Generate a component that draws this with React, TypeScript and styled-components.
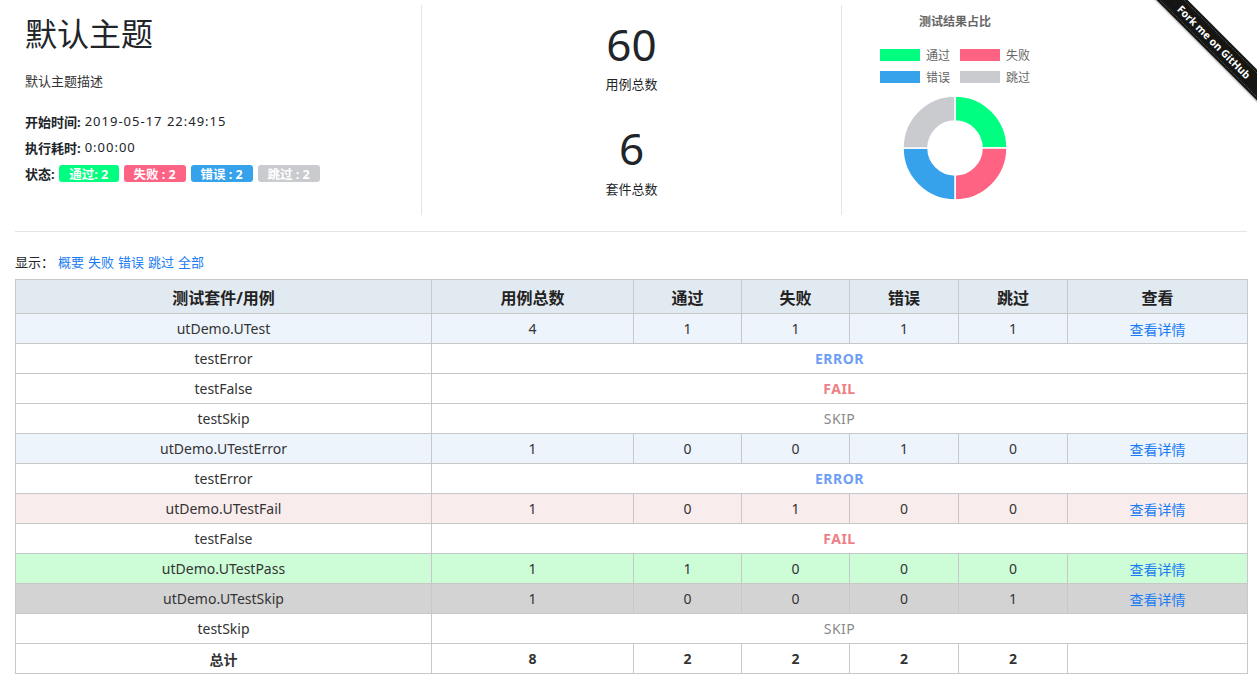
import React from "react";
import styled, { createGlobalStyle } from "styled-components";

const GlobalStyle = createGlobalStyle`
  html, body { margin: 0; padding: 0; background: #fff; }
  body {
    font-family: "Noto Sans", "Noto Sans CJK SC", sans-serif;
    color: #212529;
    font-size: 13px;
  }
`;

const Page = styled.div`
  position: relative;
  padding: 0 10px 0 15px;
  overflow: hidden;
  width: 1257px;
  box-sizing: border-box;
`;

const TopRow = styled.div`
  display: grid;
  grid-template-columns: 406px 420px 1fr;
  margin-top: 5px;
  height: 210px;
`;

const Col = styled.div<{ $border?: boolean }>`
  border-left: ${(p) => (p.$border ? "1px solid #e5e5e5" : "none")};
  display: flex;
  flex-direction: column;
`;

const InfoCol = styled(Col)`
  padding-left: 10px;
`;

const Title = styled.h1`
  margin: 9px 0 0;
  font-size: 32px;
  line-height: 40px;
  font-weight: 400;
  color: #212529;
`;

const Desc = styled.p`
  margin: 17px 0 0;
  font-size: 13px;
  line-height: 20px;
  color: #333;
`;

const InfoList = styled.div`
  margin-top: 17px;
  display: flex;
  flex-direction: column;
`;

const InfoLine = styled.div`
  display: flex;
  align-items: center;
  height: 26px;
  font-size: 13px;
  color: #212529;
`;

const Label = styled.b`
  font-weight: 700;
  margin-right: 4px;
`;

const Value = styled.span`
  letter-spacing: 1px;
`;

const Badge = styled.span<{ $bg: string; $w: number }>`
  display: inline-flex;
  align-items: center;
  justify-content: center;
  height: 17px;
  width: ${(p) => p.$w}px;
  border-radius: 3px;
  background: ${(p) => p.$bg};
  color: #fff;
  font-weight: 700;
  font-size: 12.5px;
  margin-right: 5px;
`;

const StatsCol = styled(Col)`
  align-items: center;
`;

const BigNum = styled.div<{ $top: number }>`
  margin-top: ${(p) => p.$top}px;
  font-size: 44px;
  line-height: 52px;
  color: #212529;
`;

const StatLabel = styled.div<{ $top: number }>`
  margin-top: ${(p) => p.$top}px;
  font-size: 13px;
  line-height: 20px;
  color: #212529;
`;

const ChartBox = styled.div`
  width: 226px;
  display: flex;
  flex-direction: column;
  align-items: center;
`;

const ChartTitle = styled.div`
  margin-top: 9px;
  font-size: 12px;
  line-height: 16px;
  font-weight: 700;
  color: #666;
`;

const Legend = styled.div`
  margin-top: 19px;
  display: flex;
  flex-direction: column;
  gap: 10px;
`;

const LegendRow = styled.div`
  display: flex;
  gap: 10px;
`;

const LegendItem = styled.div`
  display: flex;
  align-items: center;
  height: 12px;
  font-size: 12px;
  color: #666;
`;

const Swatch = styled.span<{ $bg: string }>`
  width: 40px;
  height: 12px;
  background: ${(p) => p.$bg};
  margin-right: 6px;
`;

const Donut = styled.svg`
  margin-top: 12px;
  display: block;
`;

const Rule = styled.hr`
  margin: 16px 0 0;
  border: 0;
  border-top: 1px solid #e5e5e5;
`;

const FilterBar = styled.div`
  margin-top: 20px;
  font-size: 13px;
  line-height: 20px;
  color: #212529;
  display: flex;
  gap: 4px;
`;

const FilterLabel = styled.span``;

const FilterLink = styled.a`
  color: #1a7cf5;
  text-decoration: none;
  cursor: pointer;
`;

const Table = styled.table`
  margin-top: 7px;
  width: 1232px;
  border-collapse: collapse;
  table-layout: fixed;
  font-size: 14px;
  color: #333;
`;

const HeadCell = styled.th`
  height: 33px;
  padding: 0;
  border: 1px solid #c8c8c8;
  background: #e2eaf1;
  font-size: 16px;
  font-weight: 700;
  color: #222;
  text-align: center;
`;

const Row = styled.tr<{ $bg?: string }>`
  background: ${(p) => p.$bg || "#fff"};
`;

const Cell = styled.td<{ $bold?: boolean }>`
  height: 29px;
  padding: 0;
  border: 1px solid #c8c8c8;
  text-align: center;
  font-weight: ${(p) => (p.$bold ? 700 : 400)};
`;

const StatusText = styled.span<{ $color: string; $bold?: boolean }>`
  color: ${(p) => p.$color};
  font-weight: ${(p) => (p.$bold ? 700 : 400)};
  letter-spacing: 0.5px;
`;

const DetailLink = styled.a`
  color: #1a7cf5;
  text-decoration: none;
  cursor: pointer;
`;

const RibbonWrap = styled.div`
  position: absolute;
  top: 0;
  right: 0;
  width: 149px;
  height: 149px;
  overflow: hidden;
  pointer-events: none;
`;

const Ribbon = styled.div`
  position: absolute;
  left: 6px;
  top: 31px;
  width: 200px;
  height: 22px;
  background: #151513;
  transform: rotate(45deg);
  display: flex;
  align-items: center;
  justify-content: center;
  color: #fff;
  font-size: 10.5px;
  font-weight: 700;
  box-shadow: 0 1px 2px rgba(0, 0, 0, 0.3);
  &::before,
  &::after {
    content: "";
    position: absolute;
    left: 0;
    right: 0;
    border-top: 1px dotted rgba(255, 255, 255, 0.25);
  }
  &::before { top: 2px; }
  &::after { bottom: 2px; }
`;

const GREEN = "#00ff80";
const PINK = "#ff6384";
const BLUE = "#36a2eb";
const GRAY = "#c9cbcf";

function sector(cx: number, cy: number, r0: number, r1: number, a0: number, a1: number) {
  const rad = (d: number) => (d * Math.PI) / 180;
  const p = (r: number, a: number) => [cx + r * Math.cos(rad(a)), cy + r * Math.sin(rad(a))];
  const [x1, y1] = p(r1, a0);
  const [x2, y2] = p(r1, a1);
  const [x3, y3] = p(r0, a1);
  const [x4, y4] = p(r0, a0);
  return `M${x1} ${y1} A${r1} ${r1} 0 0 1 ${x2} ${y2} L${x3} ${y3} A${r0} ${r0} 0 0 0 ${x4} ${y4} Z`;
}

type Suite = {
  kind: "suite";
  name: string;
  vals: number[];
  bg: string;
};
type Case = { kind: "case"; name: string; status: "ERROR" | "FAIL" | "SKIP" };

const SUITE_BG = "#edf4fc";
const rows: (Suite | Case)[] = [
  { kind: "suite", name: "utDemo.UTest", vals: [4, 1, 1, 1, 1], bg: SUITE_BG },
  { kind: "case", name: "testError", status: "ERROR" },
  { kind: "case", name: "testFalse", status: "FAIL" },
  { kind: "case", name: "testSkip", status: "SKIP" },
  { kind: "suite", name: "utDemo.UTestError", vals: [1, 0, 0, 1, 0], bg: SUITE_BG },
  { kind: "case", name: "testError", status: "ERROR" },
  { kind: "suite", name: "utDemo.UTestFail", vals: [1, 0, 1, 0, 0], bg: "#f9ecec" },
  { kind: "case", name: "testFalse", status: "FAIL" },
  { kind: "suite", name: "utDemo.UTestPass", vals: [1, 1, 0, 0, 0], bg: "#ccfdd7" },
  { kind: "suite", name: "utDemo.UTestSkip", vals: [1, 0, 0, 0, 1], bg: "#d3d3d3" },
  { kind: "case", name: "testSkip", status: "SKIP" },
];

const statusStyle: Record<Case["status"], { color: string; bold: boolean }> = {
  ERROR: { color: "#6f9ff5", bold: true },
  FAIL: { color: "#ee7f86", bold: true },
  SKIP: { color: "#8a8a8a", bold: false },
};

const colWidths = [416, 202, 108, 108, 109, 109, 180];
const headers = ["测试套件/用例", "用例总数", "通过", "失败", "错误", "跳过", "查看"];

export default function App() {
  return (
    <>
      <GlobalStyle />
      <Page>
        <TopRow>
          <InfoCol>
            <Title>默认主题</Title>
            <Desc>默认主题描述</Desc>
            <InfoList>
              <InfoLine>
                <Label>开始时间:</Label>
                <Value>2019-05-17 22:49:15</Value>
              </InfoLine>
              <InfoLine>
                <Label>执行耗时:</Label>
                <Value>0:00:00</Value>
              </InfoLine>
              <InfoLine>
                <Label>状态:</Label>
                <Badge $bg={GREEN} $w={60}>通过: 2</Badge>
                <Badge $bg={PINK} $w={62}>失败 : 2</Badge>
                <Badge $bg={BLUE} $w={62}>错误 : 2</Badge>
                <Badge $bg={GRAY} $w={62}>跳过 : 2</Badge>
              </InfoLine>
            </InfoList>
          </InfoCol>
          <StatsCol $border>
            <BigNum $top={13}>60</BigNum>
            <StatLabel $top={4}>用例总数</StatLabel>
            <BigNum $top={28}>6</BigNum>
            <StatLabel $top={5}>套件总数</StatLabel>
          </StatsCol>
          <Col $border>
            <ChartBox>
              <ChartTitle>测试结果占比</ChartTitle>
              <Legend>
                <LegendRow>
                  <LegendItem>
                    <Swatch $bg={GREEN} />通过
                  </LegendItem>
                  <LegendItem>
                    <Swatch $bg={PINK} />失败
                  </LegendItem>
                </LegendRow>
                <LegendRow>
                  <LegendItem>
                    <Swatch $bg={BLUE} />错误
                  </LegendItem>
                  <LegendItem>
                    <Swatch $bg={GRAY} />跳过
                  </LegendItem>
                </LegendRow>
              </Legend>
              <Donut width="106" height="106" viewBox="0 0 106 106">
                <path d={sector(53, 53, 27, 52, -90, 0)} fill={GREEN} stroke="#fff" strokeWidth="1.5" />
                <path d={sector(53, 53, 27, 52, 0, 90)} fill={PINK} stroke="#fff" strokeWidth="1.5" />
                <path d={sector(53, 53, 27, 52, 90, 180)} fill={BLUE} stroke="#fff" strokeWidth="1.5" />
                <path d={sector(53, 53, 27, 52, 180, 270)} fill={GRAY} stroke="#fff" strokeWidth="1.5" />
              </Donut>
            </ChartBox>
          </Col>
        </TopRow>
        <Rule />
        <FilterBar>
          <FilterLabel>显示：</FilterLabel>
          <FilterLink>概要</FilterLink>
          <FilterLink>失败</FilterLink>
          <FilterLink>错误</FilterLink>
          <FilterLink>跳过</FilterLink>
          <FilterLink>全部</FilterLink>
        </FilterBar>
        <Table>
          <colgroup>
            {colWidths.map((w, i) => (
              <col key={i} style={{ width: w }} />
            ))}
          </colgroup>
          <thead>
            <tr>
              {headers.map((h) => (
                <HeadCell key={h}>{h}</HeadCell>
              ))}
            </tr>
          </thead>
          <tbody>
            {rows.map((r, i) =>
              r.kind === "suite" ? (
                <Row key={i} $bg={r.bg}>
                  <Cell>{r.name}</Cell>
                  {r.vals.map((v, j) => (
                    <Cell key={j}>{v}</Cell>
                  ))}
                  <Cell>
                    <DetailLink>查看详情</DetailLink>
                  </Cell>
                </Row>
              ) : (
                <Row key={i}>
                  <Cell>{r.name}</Cell>
                  <Cell colSpan={6}>
                    <StatusText $color={statusStyle[r.status].color} $bold={statusStyle[r.status].bold}>
                      {r.status}
                    </StatusText>
                  </Cell>
                </Row>
              )
            )}
            <Row>
              <Cell $bold>总计</Cell>
              <Cell $bold>8</Cell>
              <Cell $bold>2</Cell>
              <Cell $bold>2</Cell>
              <Cell $bold>2</Cell>
              <Cell $bold>2</Cell>
              <Cell />
            </Row>
          </tbody>
        </Table>
        <RibbonWrap>
          <Ribbon>Fork me on GitHub</Ribbon>
        </RibbonWrap>
      </Page>
    </>
  );
}
